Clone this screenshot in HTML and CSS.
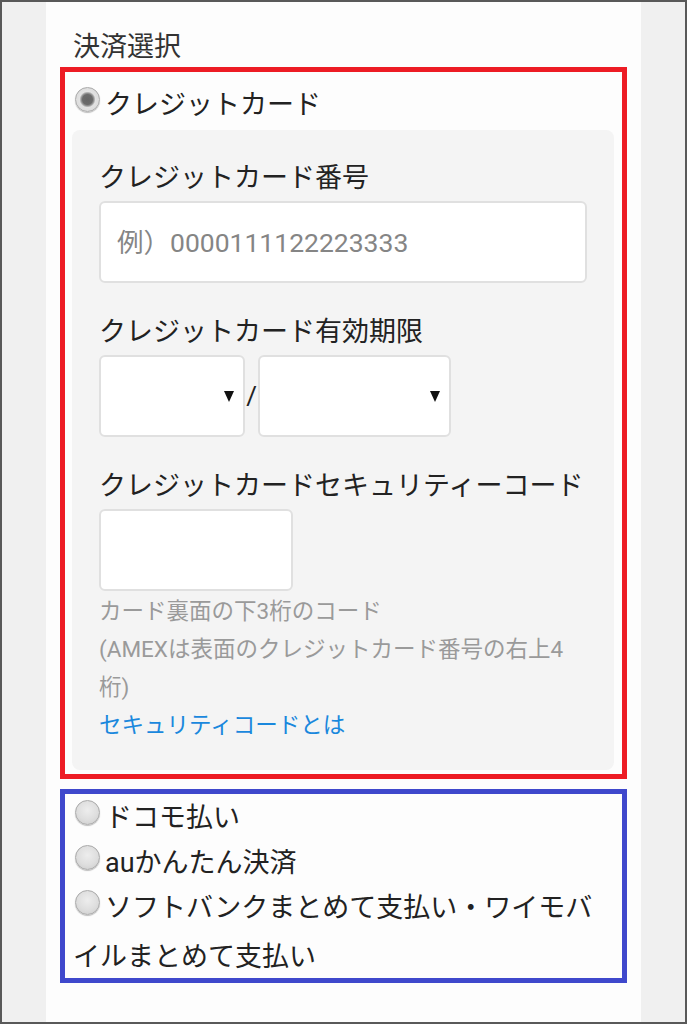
FILE: index.html
```html
<!DOCTYPE html>
<html>
<head>
    <meta charset="utf-8">
    <meta name="viewport" content="width=device-width, initial-scale=1.0">
    <title>決済選択</title>
    <link rel="stylesheet" href="styles.css">
</head>
<body>
    <div class="page">
        <div class="sheet">
            <h2 class="section-title">決済選択</h2>

            <!-- クレジットカード -->
            <div class="pay-box pay-box-card">
                <label class="pay-option"><input type="radio" name="pay" value="card" checked>クレジットカード</label>
                <div class="card-form">
                    <div class="field">
                        <div class="field-label">クレジットカード番号</div>
                        <input class="text-input card-number" type="text" placeholder="例）0000111122223333">
                    </div>
                    <div class="field">
                        <div class="field-label">クレジットカード有効期限</div>
                        <div class="expiry">
                            <div class="select-wrap month"><select></select></div>
                            <span class="slash">/</span>
                            <div class="select-wrap year"><select></select></div>
                        </div>
                    </div>
                    <div class="field">
                        <div class="field-label">クレジットカードセキュリティーコード</div>
                        <input class="text-input cvc" type="text">
                        <p class="help">カード裏面の下3桁のコード<br>(AMEXは表面のクレジットカード番号の右上4<br>桁)</p>
                        <a class="help-link" href="#">セキュリティコードとは</a>
                    </div>
                </div>
            </div>

            <!-- その他の決済 -->
            <div class="pay-box pay-box-other">
                <label class="pay-option"><input type="radio" name="pay" value="docomo">ドコモ払い</label>
                <label class="pay-option"><input type="radio" name="pay" value="au">auかんたん決済</label>
                <label class="pay-option"><input type="radio" name="pay" value="softbank">ソフトバンクまとめて支払い・ワイモバイルまとめて支払い</label>
            </div>
        </div>
    </div>
</body>
</html>
```

FILE: styles.css
```css
body {
    margin: 0;
    padding: 0;
    font-family: Roboto, "Noto Sans CJK JP", sans-serif;
    color: #222;
}

.page {
    height: 1024px;
    box-sizing: border-box;
    border: 2px solid #595959;
    background: #f0f0f0;
    display: flex;
    justify-content: center;
}

.sheet {
    width: 595px;
    box-sizing: border-box;
    background: #fdfdfd;
    padding: 25px 14px 0;
}

.section-title {
    margin: 0;
    padding-left: 13px;
    font-size: 27px;
    font-weight: normal;
    line-height: 40px;
    color: #333;
}

.pay-box {
    border: 5px solid #ed1c24;
}

.pay-box-card {
    padding: 11px 8px 4px 7px;
}

.pay-box-other {
    margin-top: 10px;
    border-color: #3f48cc;
    padding: 0 8px;
}

.pay-option {
    display: block;
    font-size: 27px;
    line-height: 45px;
}

.pay-box-card .pay-option {
    padding-left: 1px;
}

.pay-box-other .pay-option {
    line-height: 49px;
    margin-bottom: -4px;
}

.pay-option input {
    appearance: none;
    -webkit-appearance: none;
    width: 25px;
    height: 25px;
    margin: 0 5px 0 2px;
    border: 1px solid #a9a9a9;
    border-radius: 50%;
    box-sizing: border-box;
    background: radial-gradient(circle at 50% 40%, #ededed 0, #dedede 55%, #c9c9c9 100%);
    box-shadow: 0 1px 1px rgba(0, 0, 0, 0.25);
    vertical-align: 2px;
}

.pay-option input:checked {
    background: radial-gradient(circle, #656565 0, #6b6b6b 5px, #9a9a9a 6.5px, #e2e2e2 8px, #d6d6d6 100%);
}

.card-form {
    margin-top: 2px;
    background: #f4f4f4;
    border-radius: 8px;
    padding: 28px 27px 26px;
}

.field + .field {
    margin-top: 29px;
}

.field-label {
    font-size: 27px;
    line-height: 40px;
    margin-bottom: 3px;
}

.text-input {
    display: block;
    height: 82px;
    box-sizing: border-box;
    border: 2px solid #e0e0e0;
    border-radius: 6px;
    background: #fff;
    font-family: inherit;
    font-size: 26.5px;
    color: #222;
    padding: 0 16px;
    outline: none;
}

.text-input::placeholder {
    color: #858585;
}

.card-number {
    width: 100%;
}

.cvc {
    width: 194px;
}

.expiry {
    display: flex;
    align-items: center;
}

.select-wrap {
    position: relative;
    height: 82px;
}

.select-wrap.month {
    width: 146px;
}

.select-wrap.year {
    width: 193px;
}

.select-wrap select {
    appearance: none;
    -webkit-appearance: none;
    width: 100%;
    height: 100%;
    box-sizing: border-box;
    border: 2px solid #e0e0e0;
    border-radius: 6px;
    background: #fff;
}

.select-wrap::after {
    content: "";
    position: absolute;
    right: 11px;
    top: 36px;
    border-left: 5.5px solid transparent;
    border-right: 5.5px solid transparent;
    border-top: 11px solid #111;
    pointer-events: none;
}

.slash {
    font-size: 26px;
    width: 13px;
    text-align: center;
    color: #222;
}

.help {
    margin: 1px 0 0;
    font-size: 22.5px;
    line-height: 38px;
    color: #9a9a9a;
}

.help-link {
    display: block;
    font-size: 22.5px;
    line-height: 38px;
    color: #1a88dd;
    text-decoration: none;
}
```
